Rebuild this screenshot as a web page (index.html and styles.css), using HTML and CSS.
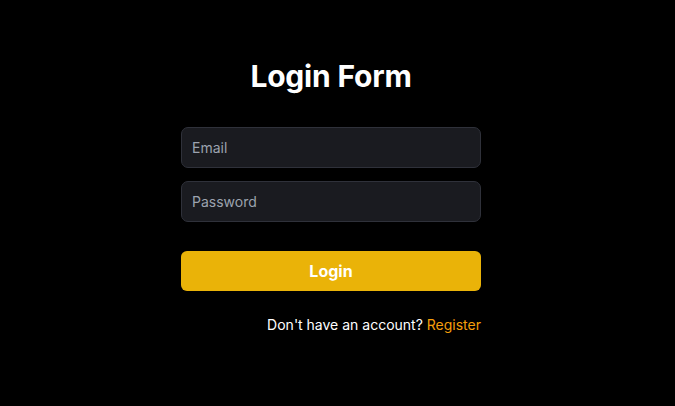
FILE: index.html
```html
<!DOCTYPE html>
<html>
<head>
<meta charset="utf-8">
<link rel="stylesheet" href="styles.css">
</head>
<body>
<div class="page">
  <form class="form">
    <h1 class="title">Login Form</h1>
    <div class="fields">
      <input class="input" type="email" placeholder="Email">
      <input class="input" type="password" placeholder="Password">
    </div>
    <button class="btn" type="button">Login</button>
    <p class="note">Don't have an account? <a class="link" href="#">Register</a></p>
  </form>
</div>
</body>
</html>
```
FILE: styles.css
```css
* { box-sizing: border-box; }
html, body { margin: 0; padding: 0; background: #000; }
body { font-family: Inter, "Noto Sans", sans-serif; color: #fff; }
.page {
  display: flex;
  justify-content: center;
  padding: 57px 13px 0 0;
  min-height: 406px;
}
.form {
  width: 300px;
  display: flex;
  flex-direction: column;
}
.title {
  margin: 0 0 32px;
  text-align: center;
  font-size: 30px;
  font-weight: 700;
  line-height: 38px;
  letter-spacing: -0.2px;
}
.fields {
  display: flex;
  flex-direction: column;
  gap: 13px;
}
.input {
  height: 41px;
  width: 100%;
  background: #1a1b20;
  border: 1px solid #2f313a;
  border-radius: 7px;
  padding: 0 10px;
  font-family: inherit;
  font-size: 14px;
  color: #fff;
  outline: none;
}
.input::placeholder { color: #9ca3af; }
.btn {
  margin-top: 29px;
  height: 40px;
  border: none;
  border-radius: 6px;
  background: #eab308;
  color: #fff;
  font-family: inherit;
  font-size: 16px;
  font-weight: 700;
}
.note {
  margin: 26px 0 0;
  text-align: right;
  font-size: 14px;
  line-height: 16px;
}
.link { color: #f59e0b; text-decoration: none; }
```
